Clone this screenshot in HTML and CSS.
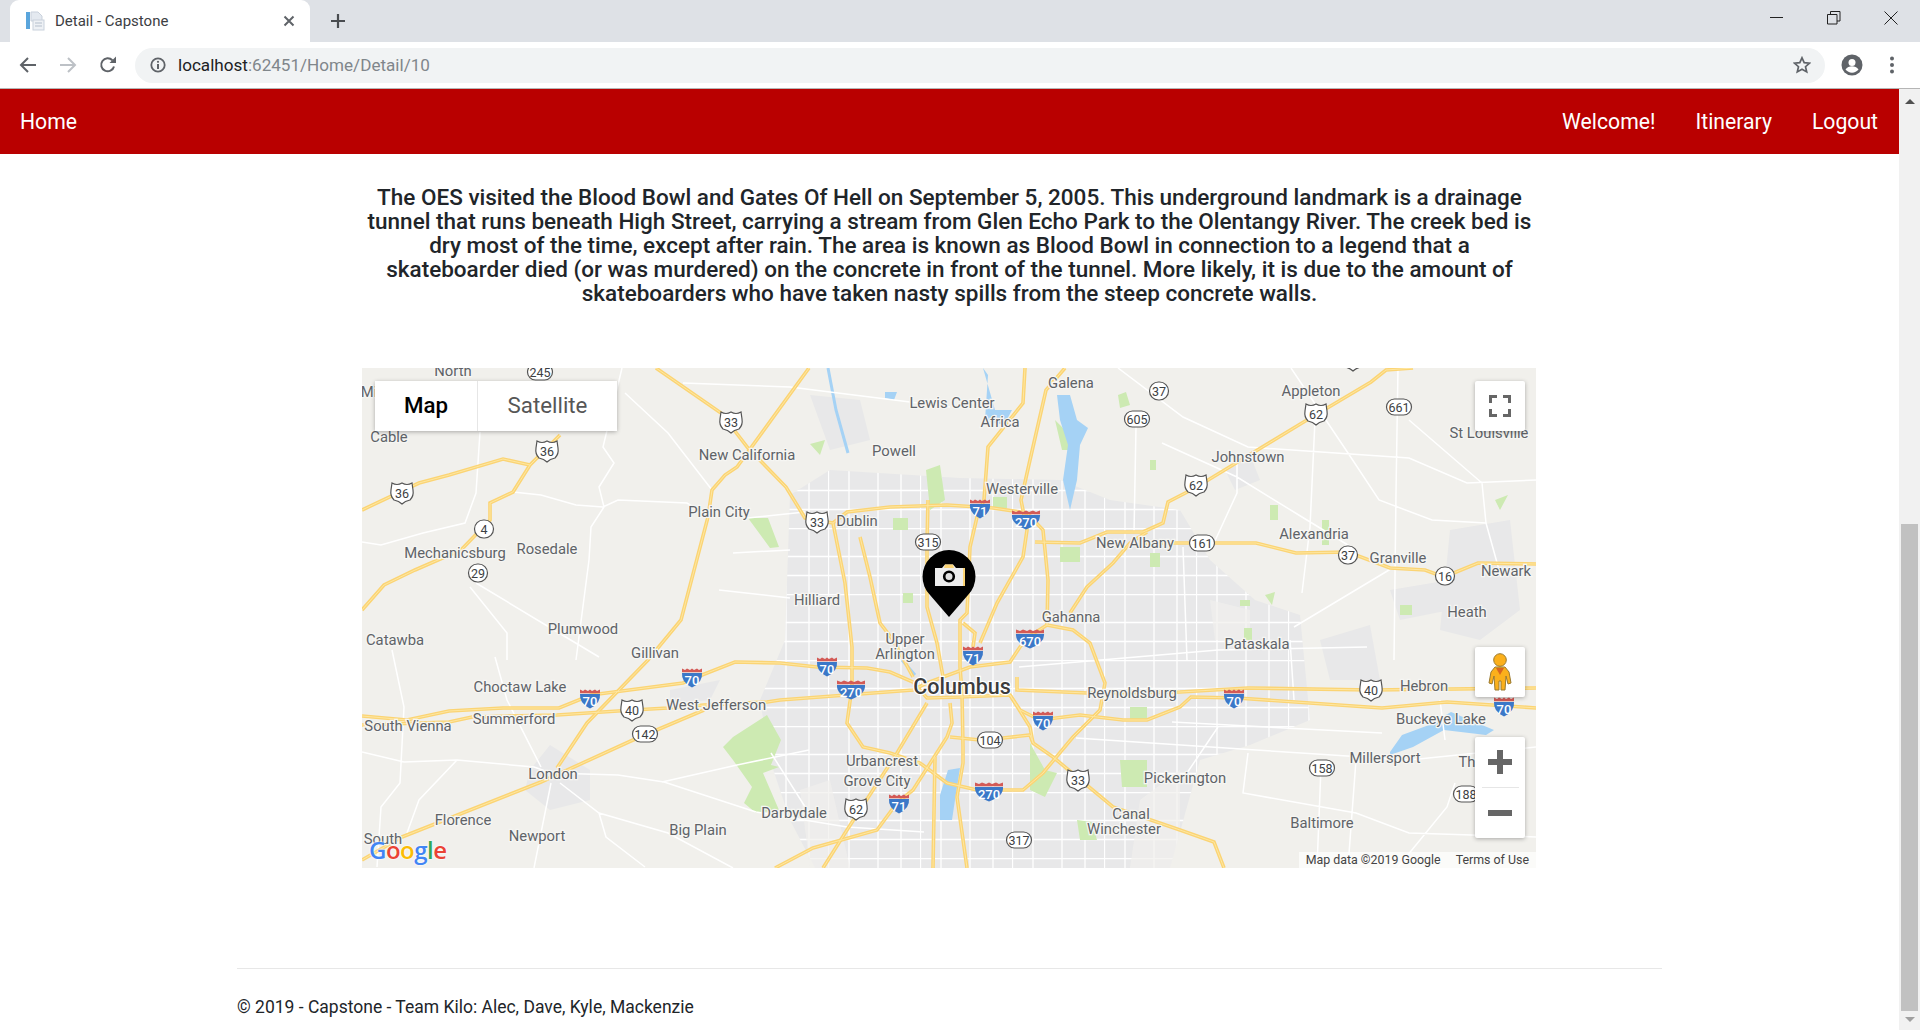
FILE: index.html
```html
<!DOCTYPE html>
<html>
<head>
	<meta charset="UTF-8">
	<title>Detail - Capstone</title>
	<link rel="stylesheet" href="styles.css">
</head>
<body>
	<!-- browser window -->
	<div class="tabstrip">
		<div class="tab">
			<svg class="favicon" width="20" height="20" viewBox="0 0 20 20"><rect x="1" y="1" width="4" height="17" fill="#5aa5dc"/><path d="M6 1h7l4 4v5H6z" fill="#e4e9f0" stroke="#c9d1dc"/><rect x="8" y="9" width="11" height="10" fill="#eef1f5" stroke="#c9d1dc"/><path d="M10 12h7M10 15h7" stroke="#b5bfcc"/></svg>
			<span class="tab-title">Detail - Capstone</span>
			<svg class="tab-close" width="12" height="12" viewBox="0 0 12 12"><path d="M1.5 1.5l9 9M10.5 1.5l-9 9" stroke="#5f6368" stroke-width="2"/></svg>
		</div>
		<svg class="new-tab" width="16" height="16" viewBox="0 0 16 16"><path d="M8 1v14M1 8h14" stroke="#494c50" stroke-width="2.2"/></svg>
		<div class="window-buttons">
			<svg width="14" height="14" viewBox="0 0 14 14"><path d="M0 6.5h13" stroke="#222" stroke-width="1"/></svg>
			<svg width="14" height="14" viewBox="0 0 14 14"><path d="M.5 3.5h9.500v9.500h-9.500zM3.500 3.500v-3h9.500v9.500h-3" fill="none" stroke="#222"/></svg>
			<svg width="14" height="14" viewBox="0 0 14 14"><path d="M.5.5l13 13M13.500.5l-13 13" stroke="#222"/></svg>
		</div>
	</div>
	<div class="toolbar">
		<svg width="18" height="18" viewBox="0 0 18 18"><path d="M17 9H2M9 2L2 9l7 7" fill="none" stroke="#5f6368" stroke-width="2"/></svg>
		<svg width="18" height="18" viewBox="0 0 18 18"><path d="M1 9h15M9 2l7 7-7 7" fill="none" stroke="#bdc1c6" stroke-width="2"/></svg>
		<svg width="18" height="18" viewBox="0 0 18 18"><path d="M15 10.500A6.500 6.500 0 1 1 13.400 4.300" fill="none" stroke="#5f6368" stroke-width="2"/><path d="M10.500 7H17V.5z" fill="#5f6368"/></svg>
		<div class="omnibox">
			<svg width="16" height="16" viewBox="0 0 16 16"><circle cx="8" cy="8" r="6.700" fill="none" stroke="#5f6368" stroke-width="1.800"/><path d="M8 7v5" stroke="#5f6368" stroke-width="2"/><circle cx="8" cy="4.800" r="1.100" fill="#5f6368"/></svg>
			<span class="url">localhost<span class="url-rest">:62451/Home/Detail/10</span></span>
			<svg class="star" width="18" height="18" viewBox="0 0 18 18"><path d="M9 1.800l2.200 4.900 5.300.5-4 3.500 1.200 5.200L9 13.200l-4.700 2.700 1.200-5.200-4-3.500 5.300-.5z" fill="none" stroke="#5f6368" stroke-width="1.700"/></svg>
		</div>
		<svg class="profile" width="22" height="22" viewBox="0 0 22 22"><circle cx="11" cy="11" r="10.500" fill="#5f6368"/><circle cx="11" cy="8.500" r="3.500" fill="#fff"/><path d="M4.500 15.500c1.500-2.500 4-3.200 6.500-3.200s5 .7 6.500 3.200c-1.500 2-4 3.200-6.500 3.200s-5-1.200-6.500-3.200z" fill="#fff"/></svg>
		<svg class="dots" width="6" height="18" viewBox="0 0 6 18"><circle cx="3" cy="2.500" r="2" fill="#5f6368"/><circle cx="3" cy="9" r="2" fill="#5f6368"/><circle cx="3" cy="15.500" r="2" fill="#5f6368"/></svg>
	</div>

	<div class="page">
		<div class="content">
			<nav class="navbar">
				<a href="#">Home</a>
				<div class="nav-right">
					<a href="#">Welcome!</a>
					<a href="#">Itinerary</a>
					<a href="#">Logout</a>
				</div>
			</nav>

			<main>
				<p class="description">The OES visited the Blood Bowl and Gates Of Hell on September 5, 2005. This underground landmark is a drainage tunnel that runs beneath High Street, carrying a stream from Glen Echo Park to the Olentangy River. The creek bed is dry most of the time, except after rain. The area is known as Blood Bowl in connection to a legend that a skateboarder died (or was murdered) on the concrete in front of the tunnel. More likely, it is due to the amount of skateboarders who have taken nasty spills from the steep concrete walls.</p>

				<div class="map">
					<svg class="map-canvas" width="1174" height="500" viewBox="362 368 1174 500">
						<defs>
							<pattern id="grid" width="92" height="66" patternUnits="userSpaceOnUse">
								<path d="M0 .5h92M0 28.500h92M0 47.500h92M.5 0v66M21 0v66M50 0v66M73 0v66" fill="none" stroke="#fff" stroke-width="1.300"/>
							</pattern>
							<g id="us"><path d="M-10-10Q-5-7 0-10Q5-7 10-10L11-3Q12 3 8 7Q3 8 0 11Q-3 8-8 7Q-12 3-11-3Z" fill="#fff" stroke="#555" stroke-width="1.200"/></g>
							<g id="inter"><path d="M-10-5H10Q11 4 0 9.500Q-11 4-10-5Z" fill="#3b78c8"/><path d="M-10-5.800V-9.500L-7-8-5-9.500-2-8 0-9.500 2-8 5-9.500 7-8 10-9.500V-5.800Z" fill="#d35a56"/></g>
							<g id="inter-wide"><path d="M-14-5H14Q15 4 0 9.500Q-15 4-14-5Z" fill="#3b78c8"/><path d="M-14-5.800V-9.500L-10-8-7-9.500-3-8 0-9.500 3-8 7-9.500 10-8 14-9.500V-5.800Z" fill="#d35a56"/></g>
							<rect id="oval" x="-9.500" y="-9" width="19" height="18" rx="9" fill="#fff" stroke="#555" stroke-width="1.200"/>
							<rect id="oval-wide" x="-12.500" y="-8" width="25" height="16" rx="8" fill="#fff" stroke="#555" stroke-width="1.200"/>
							<g id="highways">
								<path d="M362 716L407 720 449 711 503 708H559L591 695 614 692 683 683 702 675 735 662 780 663 817 667 867 668 890 672 913 682 927 698 960 697 1010 695 1020 710 1040 720 1080 715 1123 720 1147 720 1180 707 1191 697 1237 698 1382 708 1447 702 1537 708"/>
								<path d="M362 725L449 722 472 717 557 715 633 710 668 708 704 705 767 702 780 700 913 690 927 683 970 667 1010 662 1020 647 1028 637 1047 625"/>
								<path d="M1017 677V690L1087 693 1180 692 1248 688 1371 690 1537 688"/>
								<path d="M362 860L402 837 541 782 633 740 704 710"/>
								<path d="M557 768L587 723 648 660 681 620 708 517 712 490 725 475 737 467 809 368"/>
								<path d="M656 368L721 413 748 448 786 487 805 518 833 523 845 583 852 647 852 687 847 723 863 747 890 753 920 763 947 783 977 790 1023 790 1043 773 1073 737 1100 710 1105 683 1090 643 1073 630 1047 625 1048 580 1043 530 1027 513 993 508 947 505 890 507 847 512 833 523"/>
								<path d="M1025 368L1023 403 988 447 984 500 977 517 970 547 967 613 960 620 960 667 962 693 963 747 963 763 957 797 967 868"/>
								<path d="M1065 368L1046 390 1030 460 1021 500 1027 530 1023 557 997 603 980 643"/>
								<path d="M963 623L975 633 973 647"/>
								<path d="M928 500L927 543 927 607 937 643 943 677"/>
								<path d="M860 537L870 577 880 623 893 640 913 677"/>
								<path d="M950 703L952 723 947 737 913 790 897 803 877 830 813 848 775 868"/>
								<path d="M927 703L897 753 847 830 823 868"/>
								<path d="M950 737L980 740 1003 738 1030 735 1033 743 1053 757 1077 777 1113 807 1180 830 1214 842 1224 868"/>
								<path d="M1010 695L1030 727 1033 743"/>
								<path d="M935 757L933 868"/>
								<path d="M1070 613L1087 587 1113 563 1130 543 1147 532"/>
								<path d="M1035 542L1080 543 1107 532 1143 532 1163 523 1168 502 1195 488 1302 423 1371 382 1386 370 1413 368"/>
								<path d="M1141 543H1256L1296 553 1348 552 1390 568 1425 570 1444 577 1478 563 1536 564"/>
								<path d="M362 510L419 483 449 475 503 459 530 465"/>
								<path d="M560 435L530 465 513 492 490 503 490 520 461 550 415 570 384 585 362 610"/>
							</g>
						</defs>

						<rect class="land" x="362" y="368" width="1174" height="500"/>

						<!-- built up areas -->
						<path class="city" d="M790 495L830 470 960 478 1060 480 1110 500 1180 510 1210 560 1255 600 1300 615 1310 720 1250 745 1200 760 1170 868H815L790 820 770 760 760 700 785 640Z"/>
						<path class="city-grid" d="M790 495L830 470 960 478 1060 480 1110 500 1180 510 1210 560 1255 600 1300 615 1310 720 1250 745 1200 760 1170 868H815L790 820 770 760 760 700 785 640Z"/>
						<path class="city" d="M530 770L550 745 590 770 590 800 550 810 525 790ZM1450 530L1510 520 1520 610 1480 640 1440 630ZM1225 470L1250 455 1260 480 1235 490ZM670 690L720 680 710 700 670 705ZM1390 590L1450 580 1450 610 1400 620ZM810 395L860 400 870 440 830 450ZM1320 640L1370 625 1380 680 1330 680Z"/>
						<path class="land-patch" d="M800 790L830 780 850 868H810ZM1140 800L1180 770 1180 868H1130ZM1210 600L1250 610 1250 640 1215 640Z"/>

						<!-- parks -->
						<path class="park" d="M723 747L733 737 767 715 781 740 771 765 779 767 763 773 779 810 756 813 744 803 752 787 733 760ZM748 518L768 518 779 547 770 548ZM1060 547H1080V562H1060ZM1150 553H1160V567H1150ZM1030 743L1045 770 1057 773 1045 797 1030 790ZM1120 760H1147V787H1122ZM1077 820L1092 822 1097 840H1080ZM1130 707H1147V720H1130ZM893 518H908V530H893ZM903 593H913V603H903ZM993 497H1007V508H993ZM1270 505H1278V520H1270ZM1322 520H1329V545H1322ZM1400 605H1412V615H1400ZM1244 628H1252V640H1244ZM1118 395L1126 392 1130 405 1120 408ZM1055 420L1065 430 1075 450 1062 450ZM1265 595L1275 592 1272 605ZM1495 500L1508 495 1500 510ZM926 470L940 465 945 500 930 510ZM810 444L825 440 820 455ZM1150 460H1156V470H1150ZM1240 600H1250V606H1240Z"/>

						<!-- water -->
						<path class="water" d="M983 368L995 410 1012 410 1004 425 985 420 988 375ZM1057 395L1070 395 1077 420 1088 428 1080 445 1077 480 1070 510 1063 480 1068 445 1060 420ZM885 392H897L894 400 885 398ZM1390 752L1402 735 1429 725 1451 712 1494 730 1486 735 1444 730 1413 747 1390 755ZM948 770L960 768 955 800 952 820 940 820 940 795Z"/>
						<path class="river" d="M828 368L836 410 848 453M902 660L915 675"/>

						<!-- roads -->
						<path class="road" d="M480 432L476 493 465 523 423 533 381 545 362 542M513 492L541 495 576 505 603 507 618 500 687 503 710 517M622 368L603 447 614 463 599 487 604 507 591 527 589 560 576 660M625 393L668 433 712 490M683 383L790 387 950 407M470 587L507 633 507 660M476 583L549 627 599 657M719 590L790 598M733 553L790 550M748 518L805 512M1118 368L1183 417 1248 447 1409 458 1467 483 1536 480M1136 427L1134 533M1162 443L1237 477 1302 517 1356 550M1237 460V493L1214 543M1315 420L1310 527 1302 593M1398 368L1396 493 1394 660M1291 368L1348 453 1379 500 1432 520 1486 523M1409 420L1482 483 1486 523 1501 577M1183 547L1187 660M1294 627L1394 567M1019 667L1218 650 1367 647M1172 722L1382 733M1076 738L1256 750 1409 760 1536 747M1218 727L1187 773M1248 753L1243 793 1356 813 1409 833 1536 837M1321 767L1317 867M1356 760L1348 867M1455 783L1447 807 1398 867M362 752L404 762 457 760 534 767 551 773 618 775 664 782 756 812M392 650L404 707 400 783 381 807 377 867M495 657L507 700 541 767M551 783L534 868M560 783L599 813 668 833 733 868M599 813L606 837 645 867M457 760L419 800 407 833M662 782L737 765 809 750M771 753L809 813M756 812L847 827 924 832M1290 640L1294 700M1440 700L1445 740"/>
						<use href="#highways" class="hw-edge"/>
						<use href="#highways" class="hw-core"/>

						<g class="places">
							<text x="453" y="371">North</text>
							<text x="389" y="437">Cable</text>
							<text x="369" y="392">Mi</text>
							<text x="952" y="403">Lewis Center</text>
							<text x="1071" y="383">Galena</text>
							<text x="1000" y="422">Africa</text>
							<text x="1311" y="391">Appleton</text>
							<text x="1489" y="433">St Louisville</text>
							<text x="747" y="455">New California</text>
							<text x="894" y="451">Powell</text>
							<text x="1248" y="457">Johnstown</text>
							<text x="1022" y="489">Westerville</text>
							<text x="719" y="512">Plain City</text>
							<text x="857" y="521">Dublin</text>
							<text x="1135" y="543">New Albany</text>
							<text x="1314" y="534">Alexandria</text>
							<text x="1398" y="558">Granville</text>
							<text x="1506" y="571">Newark</text>
							<text x="547" y="549">Rosedale</text>
							<text x="455" y="553">Mechanicsburg</text>
							<text x="817" y="600">Hilliard</text>
							<text x="1467" y="612">Heath</text>
							<text x="1071" y="617">Gahanna</text>
							<text x="395" y="640">Catawba</text>
							<text x="583" y="629">Plumwood</text>
							<text x="905" y="639">Upper</text>
							<text x="905" y="654">Arlington</text>
							<text x="1257" y="644">Pataskala</text>
							<text x="655" y="653">Gillivan</text>
							<text x="520" y="687">Choctaw Lake</text>
							<text x="716" y="705">West Jefferson</text>
							<text x="1132" y="693">Reynoldsburg</text>
							<text x="1424" y="686">Hebron</text>
							<text x="1441" y="719">Buckeye Lake</text>
							<text x="408" y="726">South Vienna</text>
							<text x="514" y="719">Summerford</text>
							<text x="553" y="774">London</text>
							<text x="882" y="761">Urbancrest</text>
							<text x="877" y="781">Grove City</text>
							<text x="1385" y="758">Millersport</text>
							<text x="1467" y="762">Th</text>
							<text x="1185" y="778">Pickerington</text>
							<text x="794" y="813">Darbydale</text>
							<text x="463" y="820">Florence</text>
							<text x="1131" y="814">Canal</text>
							<text x="1124" y="829">Winchester</text>
							<text x="537" y="836">Newport</text>
							<text x="698" y="830">Big Plain</text>
							<text x="1322" y="823">Baltimore</text>
							<text x="383" y="839">South</text>
							<text class="big-place" x="962" y="686">Columbus</text>
						</g>

						<!-- highway shields -->
						<g class="shields">
							<use href="#oval-wide" x="540" y="372"/><text x="540" y="372">245</text>
							<use href="#oval" x="1159" y="391"/><text x="1159" y="391">37</text>
							<use href="#oval-wide" x="1137" y="419"/><text x="1137" y="419">605</text>
							<use href="#oval-wide" x="1399" y="407"/><text x="1399" y="407">661</text>
							<use href="#oval" x="484" y="529"/><text x="484" y="529">4</text>
							<use href="#oval" x="478" y="573"/><text x="478" y="573">29</text>
							<use href="#oval-wide" x="928" y="542"/><text x="928" y="542">315</text>
							<use href="#oval-wide" x="1202" y="543"/><text x="1202" y="543">161</text>
							<use href="#oval" x="1348" y="555"/><text x="1348" y="555">37</text>
							<use href="#oval" x="1445" y="576"/><text x="1445" y="576">16</text>
							<use href="#oval-wide" x="645" y="734"/><text x="645" y="734">142</text>
							<use href="#oval-wide" x="990" y="740"/><text x="990" y="740">104</text>
							<use href="#oval-wide" x="1322" y="768"/><text x="1322" y="768">158</text>
							<use href="#oval-wide" x="1466" y="794"/><text x="1466" y="794">188</text>
							<use href="#oval-wide" x="1019" y="840"/><text x="1019" y="840">317</text>
							<use href="#us" x="731" y="422"/><text x="731" y="422">33</text>
							<use href="#us" x="547" y="451"/><text x="547" y="451">36</text>
							<use href="#us" x="402" y="493"/><text x="402" y="493">36</text>
							<use href="#us" x="1316" y="414"/><text x="1316" y="414">62</text>
							<use href="#us" x="817" y="522"/><text x="817" y="522">33</text>
							<use href="#us" x="1196" y="485"/><text x="1196" y="485">62</text>
							<use href="#us" x="632" y="710"/><text x="632" y="710">40</text>
							<use href="#us" x="856" y="809"/><text x="856" y="809">62</text>
							<use href="#us" x="1078" y="780"/><text x="1078" y="780">33</text>
							<use href="#us" x="1371" y="690"/><text x="1371" y="690">40</text>
							<use href="#us" x="1353" y="360"/>
						</g>
						<g class="interstates">
							<use href="#inter" x="980" y="509"/><text x="980" y="511">71</text>
							<use href="#inter-wide" x="1026" y="520"/><text x="1026" y="522">270</text>
							<use href="#inter-wide" x="1030" y="639"/><text x="1030" y="641">670</text>
							<use href="#inter" x="973" y="656"/><text x="973" y="658">71</text>
							<use href="#inter" x="827" y="667"/><text x="827" y="669">70</text>
							<use href="#inter-wide" x="851" y="690"/><text x="851" y="692">270</text>
							<use href="#inter" x="692" y="678"/><text x="692" y="680">70</text>
							<use href="#inter" x="590" y="699"/><text x="590" y="701">70</text>
							<use href="#inter" x="1043" y="721"/><text x="1043" y="723">70</text>
							<use href="#inter" x="1234" y="699"/><text x="1234" y="701">70</text>
							<use href="#inter" x="1504" y="707"/><text x="1504" y="709">70</text>
							<use href="#inter" x="899" y="804"/><text x="899" y="806">71</text>
							<use href="#inter-wide" x="989" y="792"/><text x="989" y="794">270</text>
						</g>

						<!-- camera marker -->
						<path class="pin" d="M949 617L930 595A26.500 26.500 0 1 1 968 595Z"/>
						<path class="pin-camera" d="M935 568H942L945 564.500H953L956 568H965V586H935Z"/>
						<path class="pin-stripe" d="M963 568H965V586H963ZM945 564.500H953L954 568H944Z"/>
						<circle class="pin-lens" cx="949" cy="576.500" r="4.800"/>
					</svg>

					<div class="map-type">
						<button class="map-type-btn active">Map</button>
						<button class="map-type-btn">Satellite</button>
					</div>
					<button class="map-btn fullscreen">
						<svg width="22" height="22" viewBox="0 0 22 22"><path d="M1.500 8V1.500H8M14 1.500h6.500V8M20.500 14v6.500H14M8 20.500H1.500V14" fill="none" stroke="#666" stroke-width="3"/></svg>
					</button>
					<button class="map-btn pegman">
						<svg width="26" height="38" viewBox="0 0 26 38"><circle cx="13" cy="7" r="6.300" fill="#fbb01c" stroke="#9a7a30"/><path d="M8 14H18L22 19 24 30 21 31 19 23 18 37H14V28H12V37H8L7 23 5 31 2 30 4 19Z" fill="#fbb01c" stroke="#9a7a30" stroke-linejoin="round"/><path d="M9 15H17L13 22Z" fill="#d9661f"/></svg>
					</button>
					<div class="zoom-control">
						<button class="zoom-btn">
							<svg width="24" height="24" viewBox="0 0 24 24"><path d="M9 0h6v9h9v6h-9v9H9v-9H0V9h9z" fill="#666"/></svg>
						</button>
						<div class="zoom-divider"></div>
						<button class="zoom-btn">
							<svg width="24" height="6" viewBox="0 0 24 6"><path d="M0 0h24v6H0z" fill="#666"/></svg>
						</button>
					</div>
					<div class="google-logo"><span class="g-blue">G</span><span class="g-red">o</span><span class="g-yellow">o</span><span class="g-blue">g</span><span class="g-green">l</span><span class="g-red">e</span></div>
					<div class="attribution">
						<span>Map data ©2019 Google</span>
						<span>Terms of Use</span>
					</div>
				</div>
			</main>

			<footer>
				<hr>
				<p>© 2019 - Capstone - Team Kilo: Alec, Dave, Kyle, Mackenzie</p>
			</footer>
		</div>

		<div class="scrollbar">
			<div class="arrow-up"></div>
			<div class="track"><div class="thumb"></div></div>
			<div class="arrow-down"></div>
		</div>
	</div>
</body>
</html>
```

FILE: styles.css
```css
* {
	box-sizing: border-box;
}

html, body {
	margin: 0;
	padding: 0;
	height: 1030px;
	overflow: hidden;
	background-color: #fff;
}

body {
	font-family: Roboto, 'Liberation Sans', sans-serif;
	color: #212529;
}

/* Ventana del navegador */
.tabstrip {
	height: 42px;
	background-color: #dee1e6;
	display: flex;
	align-items: flex-start;
	padding-left: 10px;
}

.tab {
	width: 300px;
	height: 42px;
	background-color: #fff;
	border-radius: 9px 9px 0 0;
	display: flex;
	align-items: center;
	padding: 0 15px;
}

.favicon {
	margin-right: 10px;
}

.tab-title {
	flex: 1;
	font-size: 15px;
	color: #3c4043;
}

.new-tab {
	margin: 13px 0 0 20px;
}

.window-buttons {
	margin-left: auto;
	display: flex;
	gap: 43px;
	padding: 11px 22px 0 0;
}

.toolbar {
	height: 47px;
	background-color: #fff;
	border-bottom: 1px solid #b5b5b5;
	display: flex;
	align-items: center;
	padding: 0 19px;
	gap: 22px;
}

.omnibox {
	width: 1690px;
	height: 35px;
	margin-left: -4px;
	background-color: #f1f3f4;
	border-radius: 18px;
	display: flex;
	align-items: center;
	padding: 0 14px 0 15px;
}

.url {
	margin-left: 12px;
	font-size: 17.100px;
	color: #202124;
}

.url-rest {
	color: #80868b;
}

.star {
	margin-left: auto;
}

.profile {
	margin-left: -6px;
}

.dots {
	margin-left: 4px;
}

/* Pagina */
.page {
	display: flex;
	height: 941px;
}

.content {
	flex: 1;
	min-width: 0;
}

.navbar {
	height: 65px;
	background-color: #b90000;
	display: flex;
	justify-content: space-between;
	align-items: center;
	padding: 0 21px 0 20px;
}

.navbar a {
	color: #fff;
	font-size: 21.200px;
	text-decoration: none;
}

.nav-right {
	display: flex;
	gap: 40px;
}

main {
	padding-top: 31px;
}

.description {
	width: 1174px;
	margin: 0 auto 63px;
	font-size: 22.500px;
	font-weight: 500;
	line-height: 24px;
	text-align: center;
}

/* Mapa */
.map {
	position: relative;
	width: 1174px;
	height: 500px;
	margin-left: 362px;
	overflow: hidden;
}

.map-canvas {
	display: block;
}

.land {
	fill: #f1f0ec;
}

.land-patch {
	fill: #f1f0ec;
	opacity: 0.7;
}

.city {
	fill: #e8e8e9;
}

.city-grid {
	fill: url(#grid);
}

.park {
	fill: #cdeab2;
}

.water {
	fill: #a5d2f5;
}

.river {
	fill: none;
	stroke: #a5d2f5;
	stroke-width: 3;
}

.road {
	fill: none;
	stroke: #fff;
	stroke-width: 1.500;
}

.hw-edge {
	fill: none;
	stroke: #fbd474;
	stroke-width: 3.600;
}

.hw-core {
	fill: none;
	stroke: #fee7a2;
	stroke-width: 1;
}

.places text {
	font-size: 14.800px;
	fill: #5f6368;
	stroke: #f6f6f3;
	stroke-width: 2.500px;
	paint-order: stroke;
	text-anchor: middle;
	dominant-baseline: central;
}

.places .big-place {
	font-size: 21.500px;
	font-weight: 500;
	fill: #3c3c3c;
	stroke: #fff;
}

.shields text {
	font-size: 12.500px;
	fill: #3c4043;
	text-anchor: middle;
	dominant-baseline: central;
}

.interstates text {
	font-size: 13px;
	font-weight: 500;
	fill: #fff;
	text-anchor: middle;
	dominant-baseline: central;
}

.pin {
	fill: #000;
}

.pin-camera {
	fill: #ededed;
}

.pin-stripe {
	fill: #fbd474;
}

.pin-lens {
	fill: #e0e0e0;
	stroke: #000;
	stroke-width: 2.600;
}

button {
	border: none;
	padding: 0;
	font-family: inherit;
	background-color: #fff;
}

.map-type {
	position: absolute;
	top: 13px;
	left: 13px;
	display: flex;
	border-radius: 2px;
	box-shadow: 0 1px 4px rgba(0, 0, 0, 0.3);
}

.map-type-btn {
	height: 50px;
	width: 102px;
	padding-bottom: 2px;
	font-size: 22.300px;
	color: #565656;
}

.map-type-btn + .map-type-btn {
	width: 140px;
	border-left: 1px solid #e6e6e6;
}

.map-type-btn.active {
	color: #000;
	font-weight: 500;
}

.map-btn {
	position: absolute;
	left: 1113px;
	width: 50px;
	height: 50px;
	border-radius: 2px;
	display: flex;
	justify-content: center;
	align-items: center;
	box-shadow: 0 1px 4px rgba(0, 0, 0, 0.3);
}

.fullscreen {
	top: 13px;
}

.pegman {
	top: 279px;
}

.zoom-control {
	position: absolute;
	top: 369px;
	left: 1113px;
	width: 50px;
	height: 101px;
	background-color: #fff;
	border-radius: 2px;
	box-shadow: 0 1px 4px rgba(0, 0, 0, 0.3);
	display: flex;
	flex-direction: column;
	align-items: center;
}

.zoom-btn {
	flex: 1;
	width: 100%;
	display: flex;
	justify-content: center;
	align-items: center;
	background: none;
}

.zoom-divider {
	width: 37px;
	height: 1px;
	background-color: #e6e6e6;
}

.google-logo {
	position: absolute;
	left: 7px;
	bottom: 2px;
	font-family: 'Open Sans', sans-serif;
	font-size: 24px;
	font-weight: 600;
	letter-spacing: -0.5px;
	text-shadow: 0 0 2px #fff, 0 0 2px #fff;
}

.g-blue {
	color: #4285f4;
}

.g-red {
	color: #ea4335;
}

.g-yellow {
	color: #fbbc05;
}

.g-green {
	color: #34a853;
}

.attribution {
	position: absolute;
	right: 0;
	bottom: 0;
	height: 16px;
	padding: 0 7px 2px;
	display: flex;
	align-items: center;
	gap: 15px;
	font-size: 12.400px;
	color: #444;
	background-color: rgba(255, 255, 255, 0.7);
}

/* Pie */
footer {
	width: 1425px;
	margin: 100px auto 0;
}

footer hr {
	margin: 0;
	border: none;
	border-top: 1px solid #e7e7e7;
}

footer p {
	margin: 26px 0 0;
	font-size: 17.500px;
	line-height: 24px;
}

/* Barra de desplazamiento */
.scrollbar {
	width: 21px;
	background-color: #f1f1f1;
	display: flex;
	flex-direction: column;
	align-items: center;
}

.arrow-up {
	margin-top: 10px;
	border-left: 5px solid transparent;
	border-right: 5px solid transparent;
	border-bottom: 5px solid #505050;
}

.track {
	flex: 1;
	width: 100%;
	padding-top: 420px;
}

.thumb {
	width: 17px;
	height: 487px;
	margin: 0 auto;
	background-color: #c1c1c1;
}

.arrow-down {
	margin-bottom: 8px;
	border-left: 5px solid transparent;
	border-right: 5px solid transparent;
	border-top: 5px solid #a0a0a0;
}
```
